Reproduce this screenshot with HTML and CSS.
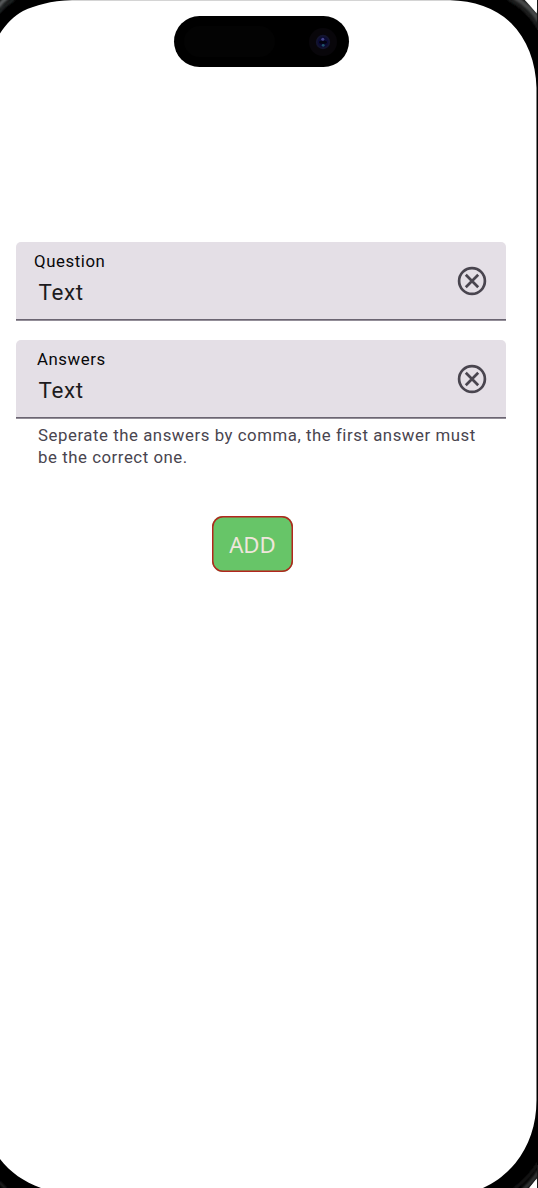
FILE: index.html
```html
<!DOCTYPE html>
<html lang="en">
<head>
<meta charset="utf-8">
<title>Add question</title>
<link rel="stylesheet" href="styles.css">
</head>
<body>
<div class="phone">
  <svg class="bezel" viewBox="0 0 538 1188" aria-hidden="true">
    <defs><filter id="soft"><feGaussianBlur stdDeviation="0.9"/></filter></defs>
    <path fill="#d4d4d4" d="M50 0H470V1H50z"/>
    <path fill="#000" d="M0 0H72C50 1 36 5 23 11C14 16 6 24 0 33.5z"/>
    <path fill="#000" d="M450 0H524.7L538 15V1177L529 1188H483C497 1182 508 1172 515.5 1163C529 1146 536.5 1125 536.5 1100V88C536 62 527 39 511 23C496 8 474 1 450 0z"/>
    <path fill="#000" d="M0 1159C10 1172 24 1182 41 1188H0z"/>
    <g fill="none" filter="url(#soft)">
      <path stroke="#5c5f60" stroke-width="4" d="M-2 7Q2 1 8 -3"/>
      <path stroke="#242526" stroke-width="3" d="M-2 13Q5 5 14 -1"/>
      <path stroke="#47494a" stroke-width="5" d="M514 -3Q530 6 540 22"/>
      <path stroke="#252627" stroke-width="2" d="M508 -1Q527 9 539 29"/>
      <path stroke="#333536" stroke-width="4" d="M539 1171Q533 1181 523 1190"/>
      <path stroke="#202122" stroke-width="2" d="M539 1162Q529 1178 514 1189"/>
      <path stroke="#292a2b" stroke-width="2" d="M-1 1182L6 1189"/>
    </g>
    <path fill="#fff" d="M525.5 0H536.5V13z"/>
    <path fill="#fff" d="M536.5 1179V1188H529.5z"/>
    <path fill="#161616" d="M537 0h1v1188h-1z"/>
    <path fill="#000" d="M537 30h1v1135h-1z"/>
  </svg>
  <div class="island">
    <span class="sensor"></span>
    <svg class="camera" viewBox="0 0 28 28" aria-hidden="true">
      <circle cx="14" cy="14" r="14" fill="#08060a"/>
      <circle cx="14" cy="14" r="7.2" fill="#13142e"/>
      <circle cx="14" cy="14" r="5.3" fill="#0b0b35"/>
      <ellipse cx="14" cy="14.2" rx="4" ry="1.6" fill="#030310"/>
      <circle cx="13.8" cy="11.3" r="1.5" fill="#45458c"/>
      <circle cx="14.2" cy="17.3" r="1.4" fill="#20566b"/>
    </svg>
  </div>
  <main class="form">
    <div class="field">
      <div class="copy"><label class="label">Question</label><span class="value">Text</span></div>
      <svg class="clear" viewBox="0 0 30 30"><circle cx="15" cy="15" r="12.9"/><path d="M8.8 8.8L21.2 21.2M21.2 8.8L8.8 21.2"/></svg>
    </div>
    <div class="field second">
      <div class="copy"><label class="label label-answers">Answers</label><span class="value">Text</span></div>
      <svg class="clear" viewBox="0 0 30 30"><circle cx="15" cy="15" r="12.9"/><path d="M8.8 8.8L21.2 21.2M21.2 8.8L8.8 21.2"/></svg>
    </div>
    <p class="hint">Seperate the answers by comma, the first answer must<br>be the correct one.</p>
    <button class="add">ADD</button>
  </main>
</div>
</body>
</html>
```
FILE: styles.css
```css
* { box-sizing: border-box; }
body { margin: 0; background: #fff; font-family: Roboto, sans-serif; }
.phone { position: relative; width: 538px; height: 1188px; overflow: hidden; padding-top: 16px; }
.bezel { position: absolute; inset: 0; width: 538px; height: 1188px; }
.island {
  position: relative;
  display: flex;
  align-items: center;
  justify-content: space-between;
  width: 175px;
  height: 51px;
  margin-left: 174px;
  padding: 0 12px 0 10px;
  border-radius: 26px;
  background: #000;
}
.sensor { width: 91px; height: 31px; border-radius: 16px; background: #030303; }
.camera { width: 28px; height: 28px; }
.form { position: relative; display: flex; flex-direction: column; width: 490px; margin: 175px 0 0 16px; }
.field {
  display: flex;
  align-items: center;
  justify-content: space-between;
  height: 79px;
  padding: 0 19px 1px 0;
  border-radius: 5px 5px 0 0;
  background: linear-gradient(#6b6572, #6b6572) 0 77px / 100% 1px no-repeat, linear-gradient(#938e98, #938e98) 0 78px / 100% 1px no-repeat, #e4dfe6;
}
.second { margin-top: 19px; }
.copy { display: flex; flex-direction: column; align-self: flex-start; padding: 8px 0 0 18px; }
.label { font-size: 16.8px; line-height: 22px; letter-spacing: 0.58px; color: #08080a; }
.label-answers { padding-left: 3px; }
.value { padding-left: 4.5px; margin-top: 4px; font-size: 22.4px; line-height: 33px; letter-spacing: 0.7px; color: #1d1b20; }
.clear { width: 30px; height: 30px; fill: none; stroke: #49454f; stroke-width: 2.7; }
.hint { margin: 5px 0 0 22px; font-size: 16.8px; line-height: 22.4px; letter-spacing: 0.55px; color: #49454f; white-space: nowrap; }
.add {
  width: 81.5px;
  height: 56px;
  margin: 47.5px 0 0 195.7px;
  padding: 2px 0 0;
  border: 0;
  border-radius: 11px;
  box-shadow: inset 0 0 0 1.5px #b3261e;
  background: #67c568;
  color: #efe6dc;
  font: 400 22.2px/54px "Noto Sans", sans-serif;
}
```
